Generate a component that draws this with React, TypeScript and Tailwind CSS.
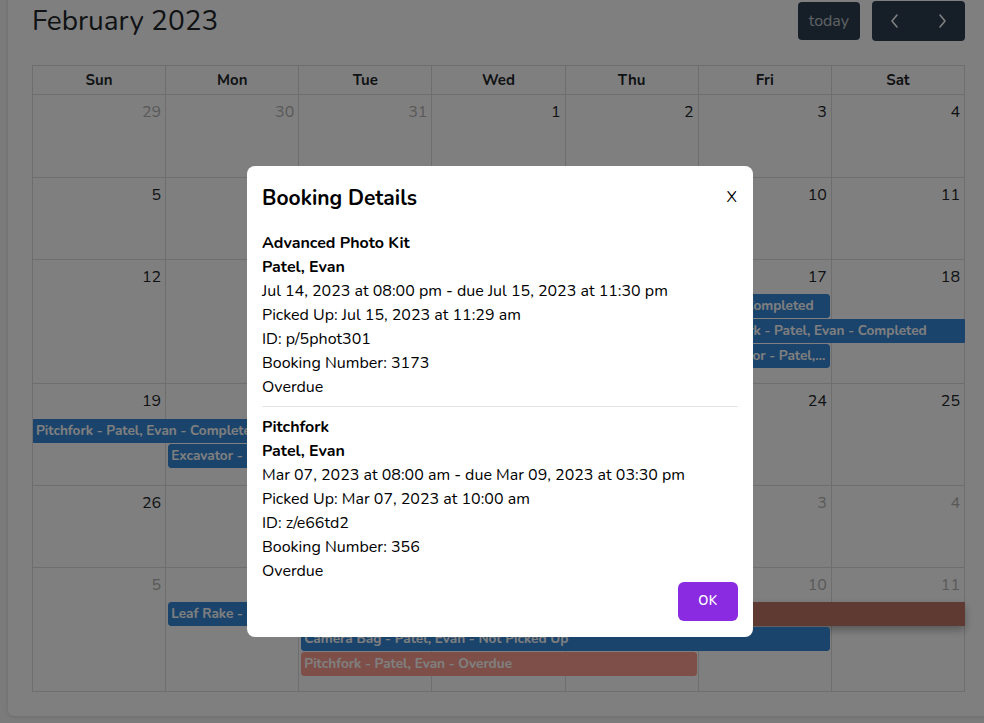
import React from 'react';

type Ev = {
  title: string;
  pos: string;
  bg: string;
  start?: boolean;
  end?: boolean;
  shadow?: boolean;
};

type Week = {
  days: number[];
  other: number[];
  height: string;
  rows: string;
  events: Ev[];
};

const BLUE = 'bg-[#3788d8] border-[#3788d8]';
const SALMON = 'bg-[#fc9f92] border-[#fc9f92]';
const BRICK = 'bg-[#bc7466] border-[#bc7466]';

const WEEKS: Week[] = [
  { days: [29, 30, 31, 1, 2, 3, 4], other: [0, 1, 2], height: 'h-[83px]', rows: 'grid-rows-1', events: [] },
  { days: [5, 6, 7, 8, 9, 10, 11], other: [], height: 'h-[82px]', rows: 'grid-rows-1', events: [] },
  {
    days: [12, 13, 14, 15, 16, 17, 18],
    other: [],
    height: 'h-[124px]',
    rows: 'grid-rows-[34px_25px_25px_25px_1fr]',
    events: [
      { title: 'Camera Bag - Patel, Evan - Completed', pos: 'col-start-5 col-end-7 row-start-2', bg: BLUE, start: true, end: true },
      { title: 'Pitchfork - Patel, Evan - Completed', pos: 'col-start-6 col-end-8 row-start-3', bg: BLUE, start: true },
      { title: 'Excavator - Patel, Evan - Completed', pos: 'col-start-6 col-end-7 row-start-4', bg: BLUE, start: true, end: true },
    ],
  },
  {
    days: [19, 20, 21, 22, 23, 24, 25],
    other: [],
    height: 'h-[102px]',
    rows: 'grid-rows-[35px_25px_25px_1fr]',
    events: [
      { title: 'Pitchfork - Patel, Evan - Completed', pos: 'col-start-1 col-end-3 row-start-2', bg: BLUE, end: true },
      { title: 'Excavator - Patel, Evan - Completed', pos: 'col-start-2 col-end-4 row-start-3', bg: BLUE, start: true, end: true },
    ],
  },
  { days: [26, 27, 28, 1, 2, 3, 4], other: [3, 4, 5, 6], height: 'h-[82px]', rows: 'grid-rows-1', events: [] },
  {
    days: [5, 6, 7, 8, 9, 10, 11],
    other: [0, 1, 2, 3, 4, 5, 6],
    height: 'h-[124px]',
    rows: 'grid-rows-[34px_25px_25px_25px_1fr]',
    events: [
      { title: 'Leaf Rake - Patel, Evan - Not Picked Up', pos: 'col-start-2 col-end-3 row-start-2', bg: BLUE, start: true, end: true },
      { title: 'Excavator - Patel, Evan - Overdue', pos: 'col-start-4 col-end-8 row-start-2', bg: BRICK, start: true, shadow: true },
      { title: 'Camera Bag - Patel, Evan - Not Picked Up', pos: 'col-start-3 col-end-7 row-start-3', bg: BLUE, start: true, end: true },
      { title: 'Pitchfork - Patel, Evan - Overdue', pos: 'col-start-3 col-end-6 row-start-4', bg: SALMON, start: true, end: true },
    ],
  },
];

const COLS = ['col-start-1', 'col-start-2', 'col-start-3', 'col-start-4', 'col-start-5', 'col-start-6', 'col-start-7'];
const DOW = ['Sun', 'Mon', 'Tue', 'Wed', 'Thu', 'Fri', 'Sat'];

const bookings = [
  {
    item: 'Advanced Photo Kit',
    name: 'Patel, Evan',
    when: 'Jul 14, 2023 at 08:00 pm - due Jul 15, 2023 at 11:30 pm',
    picked: 'Picked Up: Jul 15, 2023 at 11:29 am',
    id: 'ID: p/5phot301',
    number: 'Booking Number: 3173',
    status: 'Overdue',
  },
  {
    item: 'Pitchfork',
    name: 'Patel, Evan',
    when: 'Mar 07, 2023 at 08:00 am - due Mar 09, 2023 at 03:30 pm',
    picked: 'Picked Up: Mar 07, 2023 at 10:00 am',
    id: 'ID: z/e66td2',
    number: 'Booking Number: 356',
    status: 'Overdue',
  },
];

const Chevron = ({ dir }: { dir: 'left' | 'right' }) => (
  <svg width="10" height="16" viewBox="0 0 10 16" fill="none" stroke="currentColor" strokeWidth="1.6" strokeLinecap="round" strokeLinejoin="round">
    {dir === 'left' ? <polyline points="7,2 2,8 7,14" /> : <polyline points="3,2 8,8 3,14" />}
  </svg>
);

const EventBar = ({ ev }: { ev: Ev }) => (
  <div
    className={`${ev.pos} ${ev.bg} z-10 h-[24px] self-start overflow-hidden border text-ellipsis whitespace-nowrap px-[2px] text-[13.6px] font-bold leading-[22px] text-white ${
      ev.start ? 'ml-[2px] rounded-l-[3px]' : ''
    } ${ev.end ? 'mr-[2px] rounded-r-[3px]' : ''} ${ev.shadow ? 'shadow-[0_4px_8px_rgba(0,0,0,0.3)]' : ''}`}
  >
    {ev.title}
  </div>
);

export default function App() {
  return (
    <div
      className="relative h-[723px] w-[984px] overflow-hidden bg-[#f6f6f6] pl-2 text-[#212529]"
      style={{ fontFamily: 'Nunito, Lato, "Noto Sans", sans-serif' }}
    >
      {/* Calendar card */}
      <div className="-mt-[23px] w-[981px] rounded-md bg-white p-6 shadow-[0_1px_4px_rgba(0,0,0,0.12)]">
        <div className="mb-6 flex h-10 items-center justify-between">
          <h2 className="text-[28px] leading-none">February 2023</h2>
          <div className="flex items-center gap-3">
            <button className="h-[38px] rounded bg-[#2c3e50] px-[11px] text-base text-white/70">today</button>
            <div className="flex h-10 overflow-hidden rounded bg-[#2c3e50] text-white">
              <button className="flex w-[46px] items-center justify-center">
                <Chevron dir="left" />
              </button>
              <button className="flex w-[47px] items-center justify-center">
                <Chevron dir="right" />
              </button>
            </div>
          </div>
        </div>

        <div className="w-[933px] border-l border-t border-[#ddd]">
          <div className="grid h-[29px] grid-cols-7">
            {DOW.map((d) => (
              <div key={d} className="flex items-center justify-center border-b border-r border-[#ddd] pt-px text-[15px] font-bold">
                {d}
              </div>
            ))}
          </div>
          {WEEKS.map((w, wi) => (
            <div key={wi} className={`grid grid-cols-7 ${w.rows} ${w.height}`}>
              {w.days.map((d, i) => (
                <div
                  key={i}
                  className={`${COLS[i]} row-span-full border-b border-r border-[#ddd] pr-1 pt-[5px] text-right text-base leading-6 ${
                    w.other.includes(i) ? 'text-[#b3b3b3]' : ''
                  }`}
                >
                  {d}
                </div>
              ))}
              {w.events.map((ev, ei) => (
                <EventBar key={ei} ev={ev} />
              ))}
            </div>
          ))}
        </div>
      </div>

      {/* Modal */}
      <div className="absolute inset-0 z-20 bg-black/50 pl-[247px] pt-[166px]">
        <div className="w-[506px] rounded-lg bg-white px-[15px] pb-4 pt-[17px] text-black">
          <div className="flex items-start justify-between">
            <h3 className="text-[21px] font-bold leading-[30px]">Booking Details</h3>
            <button className="mr-[1px] mt-[4px] text-base leading-5">X</button>
          </div>
          <div className="mt-[18px]">
            {bookings.map((b, i) => (
              <div key={i}>
                {i > 0 && <div className="mb-[8px] mt-[7px] border-t border-[#e5e5e5]" />}
                <div className="text-base leading-6">
                  <div className="font-bold">{b.item}</div>
                  <div className="font-bold">{b.name}</div>
                  <div>{b.when}</div>
                  <div>{b.picked}</div>
                  <div>{b.id}</div>
                  <div>{b.number}</div>
                  <div>{b.status}</div>
                </div>
              </div>
            ))}
          </div>
          <div className="flex justify-end">
            <button className="-mt-[1px] h-[39px] w-[60px] rounded-md bg-[#8a2be2] text-[13px] font-semibold tracking-wider text-white">
              OK
            </button>
          </div>
        </div>
      </div>
    </div>
  );
}
